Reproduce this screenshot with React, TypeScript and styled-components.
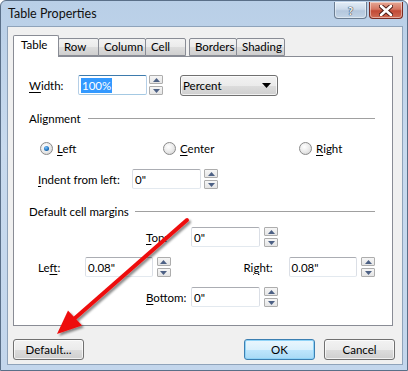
import React from "react";
import styled, { createGlobalStyle } from "styled-components";

const Global = createGlobalStyle`
  html, body { margin: 0; padding: 0; background: #ffffff; }
  body { font-family: Lato, "Noto Sans", sans-serif; font-size: 11.5px; color: #000; }
`;

const Window = styled.div`
  position: relative;
  width: 408px;
  height: 371px;
  box-sizing: border-box;
  border: 1px solid #5a6f88;
  border-radius: 6px 6px 0 0;
  background: linear-gradient(180deg, #b9cfe7 0%, #c8daee 40%, #c3d6ec 100%);
  display: flex;
  flex-direction: column;
  overflow: hidden;
`;

const TitleBar = styled.div`
  height: 25px;
  display: flex;
  align-items: flex-start;
  padding: 0 4px 0 7px;
`;

const Title = styled.div`
  flex: 1;
  font-size: 12.5px;
  line-height: 25px;
  color: #111;
`;

const CaptionButton = styled.div<{ $close?: boolean; $w: number }>`
  width: ${(p) => p.$w}px;
  height: 17px;
  margin-top: 1px;
  margin-left: 2px;
  box-sizing: border-box;
  border: 1px solid ${(p) => (p.$close ? "#7a2b22" : "#6b7d92")};
  border-top: none;
  border-radius: 0 0 4px 4px;
  background: ${(p) =>
    p.$close
      ? "linear-gradient(180deg, #e5a795 0%, #d47662 45%, #c24a36 55%, #cf6a53 100%)"
      : "linear-gradient(180deg, #e3edf7 0%, #cbdaea 45%, #b4c7dd 55%, #c3d4e6 100%)"};
  box-shadow: inset 0 0 0 1px rgba(255, 255, 255, 0.45);
  display: flex;
  align-items: center;
  justify-content: center;
  font-size: 11px;
  font-weight: bold;
  color: #fff;
  text-shadow: 0 0 1px #2c3b4f, 0 0 1px #2c3b4f, 0 0 1px #2c3b4f;
`;

const Client = styled.div`
  flex: 1;
  margin: 0 4px 5px 6px;
  border: 1px solid #8fa3ba;
  background: #f0f0f0;
  padding: 8px 0 0 5px;
  display: flex;
  flex-direction: column;
`;

const TabStrip = styled.div`
  display: flex;
  align-items: flex-end;
  height: 21px;
  position: relative;
  z-index: 1;
`;

const Tab = styled.div<{ $active?: boolean; $w: number; $gap?: number }>`
  width: ${(p) => p.$w}px;
  margin-left: ${(p) => p.$gap ?? -1}px;
  height: ${(p) => (p.$active ? 22 : 18)}px;
  margin-bottom: ${(p) => (p.$active ? -1 : 0)}px;
  position: relative;
  z-index: ${(p) => (p.$active ? 2 : 0)};
  box-sizing: border-box;
  border: 1px solid #898c95;
  border-bottom: ${(p) => (p.$active ? "none" : "1px solid #898c95")};
  border-radius: 2px 2px 0 0;
  background: ${(p) =>
    p.$active ? "#ffffff" : "linear-gradient(180deg, #f3f3f3 0%, #ebebeb 50%, #dddddd 51%, #cfcfcf 100%)"};
  padding: ${(p) => (p.$active ? "2px 0 0 7px" : "1px 0 0 5px")};
  line-height: 14px;
  white-space: nowrap;
  overflow: hidden;
`;

const Panel = styled.div`
  width: 380px;
  height: 270px;
  box-sizing: border-box;
  border: 1px solid #898c95;
  background: #ffffff;
  padding: 18px 17px 0 15px;
  display: flex;
  flex-direction: column;
`;

const Row = styled.div<{ $top: number; $indent?: number }>`
  display: flex;
  align-items: center;
  height: 20px;
  margin-top: ${(p) => p.$top}px;
  padding-left: ${(p) => p.$indent ?? 0}px;
`;

const Label = styled.div<{ $w?: number; $gap?: number }>`
  width: ${(p) => (p.$w ? `${p.$w}px` : "auto")};
  margin-left: ${(p) => p.$gap ?? 0}px;
  flex-shrink: 0;
  white-space: nowrap;
`;

const U = styled.span`
  text-decoration: underline;
  text-underline-offset: 2px;
`;

const TextBox = styled.div<{ $w: number; $focus?: boolean }>`
  width: ${(p) => p.$w}px;
  height: 20px;
  box-sizing: border-box;
  border: 1px solid ${(p) => (p.$focus ? "#a4c9e3" : "#e3e9ef")};
  border-top-color: ${(p) => (p.$focus ? "#3d7bad" : "#abadb3")};
  border-left-color: ${(p) => (p.$focus ? "#b5cfe7" : "#dbdfe6")};
  border-right-color: ${(p) => (p.$focus ? "#b5cfe7" : "#dbdfe6")};
  border-radius: 2px;
  background: #fff;
  padding-left: 2px;
  display: flex;
  align-items: center;
`;

const Selected = styled.span`
  background: #3399ff;
  color: #fff;
  padding: 1px 1px;
`;

const SpinBox = styled.div<{ $gap: number }>`
  margin-left: ${(p) => p.$gap}px;
  display: flex;
  flex-direction: column;
  gap: 2px;
`;

const SpinBtn = styled.div`
  width: 14px;
  height: 9px;
  box-sizing: border-box;
  border: 1px solid #adadad;
  border-radius: 1px;
  background: linear-gradient(180deg, #f6f6f6 0%, #e5e5e5 100%);
  display: flex;
  align-items: center;
  justify-content: center;
`;

const Select = styled.div`
  margin-left: 17px;
  width: 98px;
  height: 21px;
  box-sizing: border-box;
  border: 1px solid #707070;
  border-radius: 3px;
  background: linear-gradient(180deg, #f2f2f2 0%, #ebebeb 50%, #dddddd 51%, #cfcfcf 100%);
  box-shadow: inset 0 0 0 1px rgba(255, 255, 255, 0.7);
  display: flex;
  align-items: center;
  justify-content: space-between;
  padding: 0 6px 0 2px;
`;

const Section = styled.div<{ $top: number; $lineFrom: number }>`
  display: flex;
  align-items: center;
  height: 14px;
  margin-top: ${(p) => p.$top}px;
  &::after {
    content: "";
    margin-left: ${(p) => p.$lineFrom}px;
    flex: 1;
    height: 1px;
    background: #a0a0a0;
  }
`;

const RadioItem = styled.div<{ $w?: number }>`
  width: ${(p) => (p.$w ? `${p.$w}px` : "auto")};
  display: flex;
  align-items: center;
  gap: 4px;
`;

const RadioDot = styled.div<{ $on?: boolean }>`
  width: 11px;
  height: 11px;
  border-radius: 50%;
  border: 1px solid #8a8a8a;
  background: radial-gradient(circle at 40% 35%, #ffffff 0%, #e8e8e8 55%, #c9c9c9 100%);
  display: flex;
  align-items: center;
  justify-content: center;
  &::after {
    content: "";
    display: ${(p) => (p.$on ? "block" : "none")};
    width: 5px;
    height: 5px;
    border-radius: 50%;
    background: radial-gradient(circle at 40% 35%, #7ec3ff 0%, #1c6fb8 60%, #0b3d72 100%);
  }
`;

const ButtonBar = styled.div`
  display: flex;
  align-items: center;
  margin-top: 13px;
  padding-right: 7px;
`;

const Button = styled.div<{ $default?: boolean; $gap?: number }>`
  width: 71px;
  height: 21px;
  margin-left: ${(p) => p.$gap ?? 0}px;
  box-sizing: border-box;
  border: 1px solid ${(p) => (p.$default ? "#3c7fb1" : "#707070")};
  border-radius: 3px;
  background: ${(p) =>
    p.$default
      ? "linear-gradient(180deg, #eaf6fd 0%, #d9f0fc 50%, #bee6fd 51%, #a7d9f5 100%)"
      : "linear-gradient(180deg, #f2f2f2 0%, #ebebeb 50%, #dddddd 51%, #cfcfcf 100%)"};
  box-shadow: inset 0 0 0 1px ${(p) => (p.$default ? "#8fd3f7" : "rgba(255,255,255,0.7)")};
  display: flex;
  align-items: center;
  justify-content: center;
`;

const Arrow = styled.svg`
  position: absolute;
  left: 0;
  top: 0;
  pointer-events: none;
`;

const Up = () => (
  <svg width="7" height="4" viewBox="0 0 7 4">
    <path d="M0 4 L3.5 0 L7 4 Z" fill="#4d6185" />
  </svg>
);
const Down = () => (
  <svg width="7" height="4" viewBox="0 0 7 4">
    <path d="M0 0 L3.5 4 L7 0 Z" fill="#4d6185" />
  </svg>
);

const Spin = ({ gap = 3 }: { gap?: number }) => (
  <SpinBox $gap={gap}>
    <SpinBtn>
      <Up />
    </SpinBtn>
    <SpinBtn>
      <Down />
    </SpinBtn>
  </SpinBox>
);

export default function App() {
  return (
    <>
      <Global />
      <Window>
        <TitleBar>
          <Title>Table Properties</Title>
          <CaptionButton $w={33}>?</CaptionButton>
          <CaptionButton $w={34} $close>
            <svg width="14" height="11" viewBox="0 0 14 11">
              <path
                d="M2 1 L12 10 M12 1 L2 10"
                stroke="#4a1a14"
                strokeWidth="4.5"
                strokeLinecap="round"
              />
              <path d="M2 1 L12 10 M12 1 L2 10" stroke="#ffffff" strokeWidth="2.6" strokeLinecap="round" />
            </svg>
          </CaptionButton>
        </TitleBar>
        <Client>
          <TabStrip>
            <Tab $active $w={46} $gap={0}>Table</Tab>
            <Tab $w={41}>Row</Tab>
            <Tab $w={48}>Column</Tab>
            <Tab $w={41}>Cell</Tab>
            <Tab $w={48} $gap={3}>Borders</Tab>
            <Tab $w={49}>Shading</Tab>
          </TabStrip>
          <Panel>
            <Row $top={0}>
              <Label $w={49}>
                <U>W</U>idth:
              </Label>
              <TextBox $w={69} $focus>
                <Selected>100%</Selected>
              </TextBox>
              <Spin gap={2} />
              <Select>
                <span>Percent</span>
                <svg width="9" height="5" viewBox="0 0 9 5">
                  <path d="M0 0 L9 0 L4.5 5 Z" fill="#000" />
                </svg>
              </Select>
            </Row>
            <Section $top={16} $lineFrom={7}>
              Alignment
            </Section>
            <Row $top={13} $indent={11}>
              <RadioItem $w={123}>
                <RadioDot $on />
                <span>
                  <U>L</U>eft
                </span>
              </RadioItem>
              <RadioItem $w={136}>
                <RadioDot />
                <span>
                  <U>C</U>enter
                </span>
              </RadioItem>
              <RadioItem>
                <RadioDot />
                <span>
                  <U>R</U>ight
                </span>
              </RadioItem>
            </Row>
            <Row $top={11} $indent={9}>
              <Label $w={94}>
                <U>I</U>ndent from left:
              </Label>
              <TextBox $w={69}>0"</TextBox>
              <Spin />
            </Row>
            <Section $top={15} $lineFrom={6}>
              Default cell margins
            </Section>
            <Row $top={9} $indent={117}>
              <Label $w={45}>
                <U>T</U>op:
              </Label>
              <TextBox $w={69}>0"</TextBox>
              <Spin gap={4} />
            </Row>
            <Row $top={10} $indent={9}>
              <Label $w={47}>
                Le<U>f</U>t:
              </Label>
              <TextBox $w={68}>0.08"</TextBox>
              <Spin gap={4} />
              <Label $w={45} $gap={73}>
                Ri<U>g</U>ht:
              </Label>
              <TextBox $w={69}>0.08"</TextBox>
              <Spin gap={4} />
            </Row>
            <Row $top={10} $indent={117}>
              <Label $w={45}>
                <U>B</U>ottom:
              </Label>
              <TextBox $w={69}>0"</TextBox>
              <Spin gap={4} />
            </Row>
          </Panel>
          <ButtonBar>
            <Button>Default...</Button>
            <Button $default $gap={160}>
              OK
            </Button>
            <Button $gap={9}>Cancel</Button>
          </ButtonBar>
        </Client>
        <Arrow width="408" height="371" viewBox="0 0 408 371">
          <defs>
            <filter id="sh" x="-20%" y="-20%" width="140%" height="140%">
              <feDropShadow dx="2" dy="2" stdDeviation="1.2" floodColor="#000" floodOpacity="0.45" />
            </filter>
          </defs>
          <g filter="url(#sh)" transform="translate(-1,-1)">
            <line x1="187" y1="220" x2="74" y2="319" stroke="#ee1111" strokeWidth="4" strokeLinecap="round" />
            <path d="M57 334 L82 325.5 L68 310.5 Z" fill="#ee1111" />
          </g>
        </Arrow>
      </Window>
    </>
  );
}
